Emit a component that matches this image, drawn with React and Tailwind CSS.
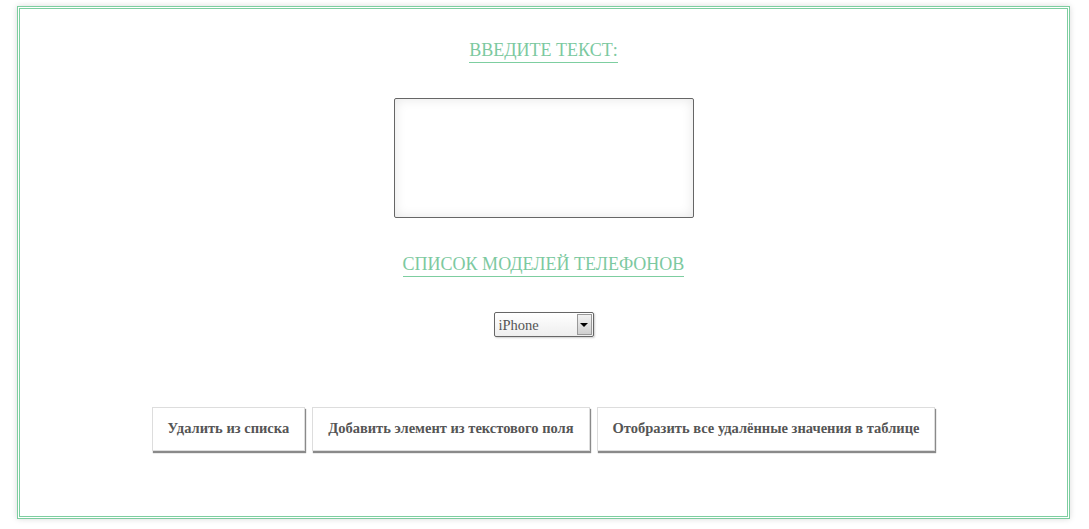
export default function App() {
  const serif = { fontFamily: '"Liberation Serif", "Times New Roman", serif' };
  return (
    <div className="w-[1089px] h-[529px] bg-white overflow-hidden" style={serif}>
      <div className="ml-[17px] mt-[6px] w-[1053px] h-[513px] border-[3px] border-double border-[#7dcea0] shadow-[0_0_6px_rgba(0,0,0,0.15)] flex flex-col items-center">
        <h2 className="mt-[31px] text-[18px] leading-[20px] pb-[2px] border-b border-[#7dcea0] text-[#7cc9a0] font-normal">
          ВВЕДИТЕ ТЕКСТ:
        </h2>
        <textarea className="mt-[35px] w-[300px] h-[120px] border border-[#666] rounded-[2px] shadow-[inset_0_0_12px_rgba(0,0,0,0.1)] resize-none outline-none bg-white"></textarea>
        <h2 className="mt-[36px] text-[18px] leading-[20px] pb-[2px] border-b border-[#7dcea0] text-[#7cc9a0] font-normal">
          СПИСОК МОДЕЛЕЙ ТЕЛЕФОНОВ
        </h2>
        <div className="relative mt-[35px] w-[100px] h-[25px]">
          <select
            className="appearance-none w-full h-full border border-[#666] rounded-[2px] bg-gradient-to-b from-white to-[#eee] pl-[4px] pt-[2px] text-[14.5px] text-[#555] outline-none shadow-[1px_1px_2px_rgba(0,0,0,0.2)]"
            style={serif}
            defaultValue="iPhone"
          >
            <option>iPhone</option>
            <option>Samsung</option>
            <option>Nokia</option>
          </select>
          <div className="pointer-events-none absolute right-[2px] top-[2px] bottom-[2px] w-[15px] border border-[#999] bg-gradient-to-b from-[#f2f2f2] to-[#cfcfcf] flex items-center justify-center">
            <div className="w-0 h-0 border-l-[4px] border-r-[4px] border-t-[4px] border-l-transparent border-r-transparent border-t-black"></div>
          </div>
        </div>
        <div className="mt-[70px] flex gap-[7px]">
          {[
            "Удалить из списка",
            "Добавить элемент из текстового поля",
            "Отобразить все удалённые значения в таблице",
          ].map((t) => (
            <button
              key={t}
              className="h-[44px] px-[15px] bg-white border border-[#ddd] shadow-[1px_2px_1px_#8a8a8a] text-[14.5px] font-bold text-[#555]"
              style={serif}
            >
              {t}
            </button>
          ))}
        </div>
      </div>
    </div>
  );
}
